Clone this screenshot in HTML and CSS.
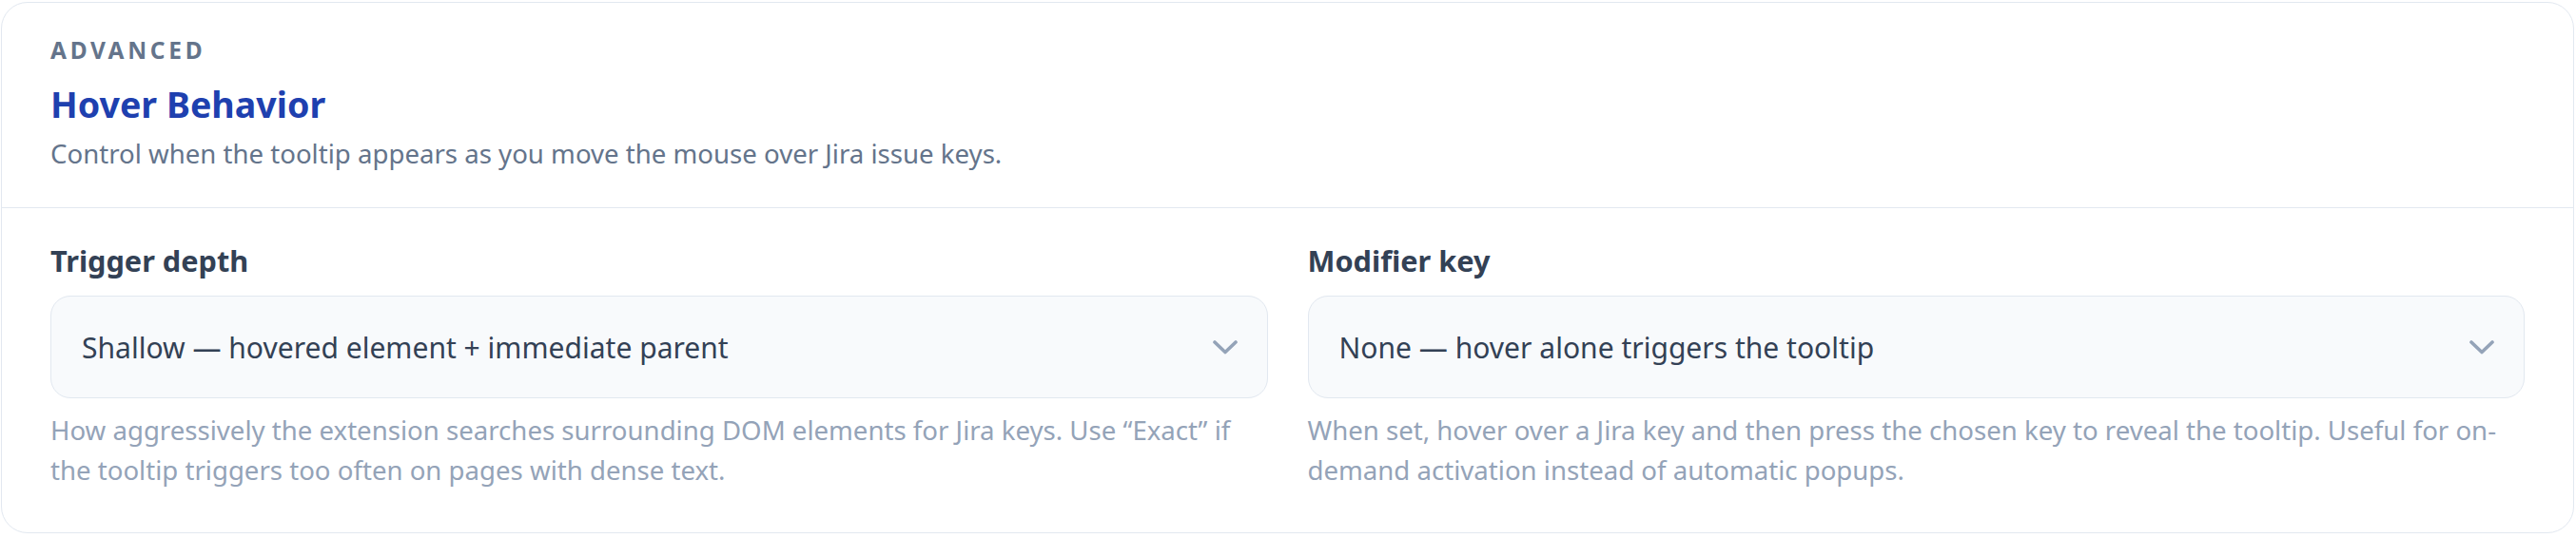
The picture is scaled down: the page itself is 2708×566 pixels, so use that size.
FILE: index.html
```html
<!DOCTYPE html>
<html lang="en">
<head>
<meta charset="utf-8">
<title>Hover Behavior</title>
<link rel="stylesheet" href="styles.css">
</head>
<body>
<section class="card">
  <header class="card-head">
    <div class="eyebrow">ADVANCED</div>
    <h2 class="title">Hover Behavior</h2>
    <p class="desc">Control when the tooltip appears as you move the mouse over Jira issue keys.</p>
  </header>
  <div class="card-body">
    <div class="field">
      <label class="label">Trigger depth</label>
      <div class="select">
        <span class="select-value">Shallow — hovered element + immediate parent</span>
        <svg class="chev" viewBox="0 0 26 15" width="26" height="15"><path d="M2 2 L13 12.5 L24 2" fill="none" stroke="#94a3b8" stroke-width="3.6" stroke-linecap="round" stroke-linejoin="round"/></svg>
      </div>
      <p class="help">How aggressively the extension searches surrounding DOM elements for Jira keys. Use “Exact” if the tooltip triggers too often on pages with dense text.</p>
    </div>
    <div class="field">
      <label class="label">Modifier key</label>
      <div class="select">
        <span class="select-value">None — hover alone triggers the tooltip</span>
        <svg class="chev" viewBox="0 0 26 15" width="26" height="15"><path d="M2 2 L13 12.5 L24 2" fill="none" stroke="#94a3b8" stroke-width="3.6" stroke-linecap="round" stroke-linejoin="round"/></svg>
      </div>
      <p class="help">When set, hover over a Jira key and then press the chosen key to reveal the tooltip. Useful for on-demand activation instead of automatic popups.</p>
    </div>
  </div>
</section>
</body>
</html>
```
FILE: styles.css
```css
html, body {
  margin: 0;
  padding: 0;
  background: #ffffff;
}
body {
  font-family: "Noto Sans", "Open Sans", sans-serif;
  padding: 2px 2px 2px 1px;
}
.card {
  border: 1.75px solid #e2e8f0;
  border-radius: 28px;
  background: #ffffff;
  overflow: hidden;
}
.card-head {
  padding: 32px 52px 36.5px 51px;
  border-bottom: 1.75px solid #e2e8f0;
}
.eyebrow {
  font-size: 24.5px;
  line-height: 35px;
  font-weight: 700;
  letter-spacing: 0.15em;
  color: #64748b;
}
.title {
  margin: 14.5px 0 0;
  font-size: 37.6px;
  line-height: 50px;
  font-weight: 700;
  color: #1e40af;
}
.desc {
  margin: 5px 0 0;
  font-size: 27.6px;
  line-height: 42px;
  color: #64748b;
}
.card-body {
  display: grid;
  grid-template-columns: 1fr 1fr;
  column-gap: 42px;
  padding: 33px 51px 44px 51px;
}
.field {
  display: flex;
  flex-direction: column;
}
.label {
  font-size: 30.7px;
  line-height: 44px;
  font-weight: 700;
  color: #334155;
}
.select {
  margin-top: 15px;
  height: 108px;
  box-sizing: border-box;
  border: 1.75px solid #e2e8f0;
  border-radius: 21px;
  background: #f8fafc;
  display: flex;
  align-items: center;
  justify-content: space-between;
  padding: 0 31px 0 32px;
}
.select-value {
  font-size: 30.05px;
  color: #334155;
}
.chev {
  flex: none;
}
.help {
  margin: 11.5px 0 0;
  font-size: 27.6px;
  line-height: 42.5px;
  color: #94a3b8;
}
```
